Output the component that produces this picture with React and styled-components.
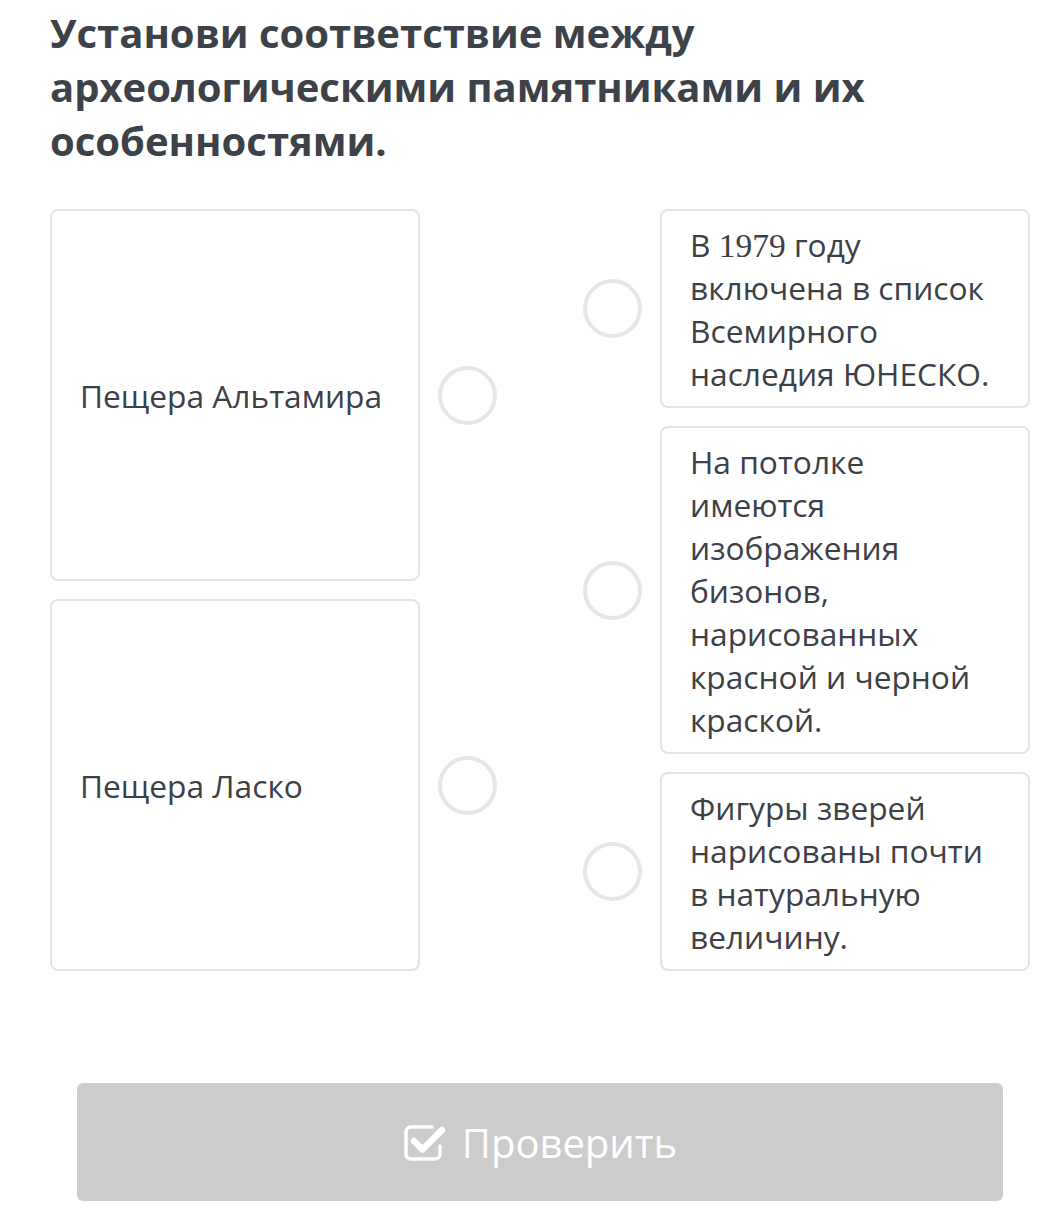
import React from "react";
import styled, { createGlobalStyle } from "styled-components";

const GlobalStyle = createGlobalStyle`
  body {
    margin: 0;
    background: #ffffff;
    font-family: "Open Sans", "Noto Sans", sans-serif;
  }
`;

const Page = styled.div`
  width: 980px;
  padding: 6px 0 30px 50px;
  display: flex;
  flex-direction: column;
`;

const Title = styled.h1`
  margin: 0;
  font-size: 40px;
  line-height: 54px;
  font-weight: 700;
  color: #3d4249;
`;

const Board = styled.div`
  margin-top: 41px;
  display: grid;
  grid-template-columns: 1fr 1fr;
`;

const Column = styled.div`
  display: flex;
  flex-direction: column;
  gap: 18px;
`;

const Row = styled.div`
  flex: 1;
  display: flex;
  align-items: center;
  gap: 18px;
  justify-content: ${(p) => (p.$right ? "flex-end" : "flex-start")};
`;

const Card = styled.div`
  box-sizing: border-box;
  width: 370px;
  align-self: stretch;
  border: 2px solid #e4e4e4;
  border-radius: 8px;
  background: #fff;
  color: #3d4047;
  font-size: 31.7px;
  line-height: 43px;
  display: flex;
  align-items: center;
  padding: ${(p) => (p.$right ? "12px 32px 11px 28px" : "0 20px 0 28px")};
`;

const Dot = styled.div`
  box-sizing: border-box;
  flex: none;
  width: 59px;
  height: 59px;
  border-radius: 50%;
  border: 4px solid #e3e6ea;
`;

const Num = styled.span`
  font-family: "Liberation Serif", "DejaVu Serif", serif;
  font-size: 33.5px;
  line-height: 1;
`;

const Footer = styled.div`
  margin-top: 112px;
  padding: 0 27px;
`;

const CheckButton = styled.div`
  height: 118px;
  border-radius: 6px;
  background: #cccccc;
  color: #ffffff;
  font-size: 40px;
  display: flex;
  align-items: center;
  justify-content: center;
  gap: 15px;
`;

const CheckIcon = () => (
  <svg width="44" height="40" viewBox="0 0 44 40" fill="none">
    <path
      d="M29 5H8a5 5 0 0 0-5 5v22a5 5 0 0 0 5 5h24a5 5 0 0 0 5-5v-8"
      stroke="#fff"
      strokeWidth="3.5"
      strokeLinecap="round"
    />
    <path
      d="M11 19l8.5 8.5L39 8"
      stroke="#fff"
      strokeWidth="6.5"
      strokeLinecap="round"
      strokeLinejoin="round"
    />
  </svg>
);

const left = ["Пещера Альтамира", "Пещера Ласко"];

const right = [
  <>
    В <Num>1979</Num> году включена в список Всемирного наследия ЮНЕСКО.
  </>,
  "На потолке имеются изображения бизонов, нарисованных красной и черной краской.",
  "Фигуры зверей нарисованы почти в натуральную величину.",
];

const App = () => {
  return (
    <>
      <GlobalStyle />
      <Page>
        <Title>
          Установи соответствие между археологическими памятниками и их
          особенностями.
        </Title>
        <Board>
          <Column>
            {left.map((t) => (
              <Row key={t}>
                <Card>{t}</Card>
                <Dot />
              </Row>
            ))}
          </Column>
          <Column>
            {right.map((t, i) => (
              <Row key={i} $right>
                <Dot />
                <Card $right>
                  <span>{t}</span>
                </Card>
              </Row>
            ))}
          </Column>
        </Board>
        <Footer>
          <CheckButton>
            <CheckIcon />
            <span>Проверить</span>
          </CheckButton>
        </Footer>
      </Page>
    </>
  );
};

export default App;
